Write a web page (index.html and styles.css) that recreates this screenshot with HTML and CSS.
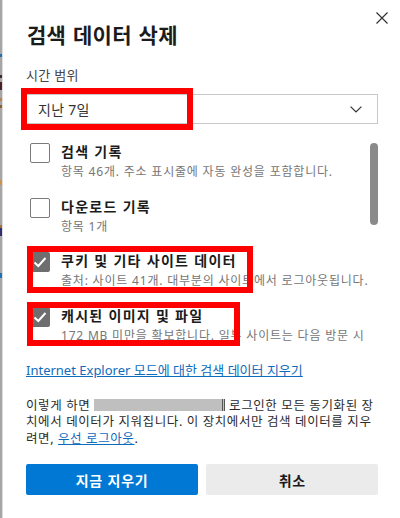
FILE: index.html
```html
<!DOCTYPE html>
<html lang="ko">
<head>
    <meta charset="UTF-8">
    <meta name="viewport" content="width=device-width, initial-scale=1.0">
    <title>검색 데이터 삭제</title>
    <link rel="stylesheet" href="styles.css">
</head>
<body>
    <div class="page">
        <div class="backdrop"></div>
        <div class="dialog">
            <div class="dialog-header">
                <h1>검색 데이터 삭제</h1>
                <button class="close" aria-label="닫기">
                    <svg width="12" height="12" viewBox="0 0 12 12"><path d="M0.5 0.5 L11.5 11.5 M11.5 0.5 L0.5 11.5" stroke="#333" stroke-width="1.2" fill="none"/></svg>
                </button>
            </div>

            <label class="field-label">시간 범위</label>
            <div class="select">
                <span>지난 7일</span>
                <svg width="12" height="7" viewBox="0 0 12 7"><path d="M0.6 0.6 L6 6 L11.4 0.6" stroke="#333" stroke-width="1.2" fill="none"/></svg>
            </div>

            <div class="options">
                <div class="option-list">
                    <div class="option">
                        <span class="checkbox"></span>
                        <div class="option-text">
                            <div class="option-title">검색 기록</div>
                            <div class="option-desc">항목 46개. 주소 표시줄에 자동 완성을 포함합니다.</div>
                        </div>
                    </div>
                    <div class="option">
                        <span class="checkbox"></span>
                        <div class="option-text">
                            <div class="option-title">다운로드 기록</div>
                            <div class="option-desc">항목 1개</div>
                        </div>
                    </div>
                    <div class="option">
                        <span class="checkbox checked">
                            <svg width="20" height="20" viewBox="0 0 20 20"><path d="M4.5 10.5 L8.3 14 L15.5 6" stroke="#fff" stroke-width="2" fill="none"/></svg>
                        </span>
                        <div class="option-text">
                            <div class="option-title">쿠키 및 기타 사이트 데이터</div>
                            <div class="option-desc nowrap">출처: 사이트 41개. 대부분의 사이트에서 로그아웃됩니다.</div>
                        </div>
                    </div>
                    <div class="option">
                        <span class="checkbox checked">
                            <svg width="20" height="20" viewBox="0 0 20 20"><path d="M4.5 10.5 L8.3 14 L15.5 6" stroke="#fff" stroke-width="2" fill="none"/></svg>
                        </span>
                        <div class="option-text">
                            <div class="option-title">캐시된 이미지 및 파일</div>
                            <div class="option-desc">172 MB 미만을 확보합니다. 일부 사이트는 다음 방문 시 로드 속도가 느려질 수 있습니다.</div>
                        </div>
                    </div>
                </div>
                <div class="scrollbar"><div class="thumb"></div></div>
            </div>

            <a class="ie-link" href="#">Internet Explorer 모드에 대한 검색 데이터 지우기</a>

            <p class="note">이렇게 하면 <span class="redacted"></span> 로그인한 모든 동기화된 장치에서 데이터가 지워집니다. 이 장치에서만 검색 데이터를 지우려면, <a href="#">우선 로그아웃</a>.</p>

            <div class="actions">
                <button class="btn btn-primary">지금 지우기</button>
                <button class="btn btn-secondary">취소</button>
            </div>
        </div>

        <!-- red annotation boxes drawn over the dialog -->
        <div class="mark mark-range"></div>
        <div class="mark mark-cookies"></div>
        <div class="mark mark-cache"></div>
    </div>
</body>
</html>
```

FILE: styles.css
```css
* {
    box-sizing: border-box;
}
body {
    margin: 0;
    font-family: "Noto Sans", "Noto Sans CJK KR", sans-serif;
    color: #1b1b1b;
    background-color: white;
}
.page {
    position: relative;
    display: flex;
    height: 518px;
    overflow: hidden;
}
.backdrop {
    flex: none;
    width: 2px;
    background: linear-gradient(to bottom,
        #a6a6a6 0 54px, #1e6fb8 54px 57px, #a6a6a6 57px 75px,
        #3a2a2a 75px 78px, #a6a6a6 78px 82px, #4a2020 82px 90px,
        #a6a6a6 90px 98px, #b98048 98px 101px, #a6a6a6 101px 105px,
        #8a6030 105px 108px, #a6a6a6 108px 180px, #d09050 180px 185px,
        #a6a6a6 185px 225px, #a07040 225px 228px, #303070 228px 236px,
        #a6a6a6 236px 273px, #1e6fb8 273px 278px, #a6a6a6 278px);
}
.dialog {
    flex: 1;
    padding: 12px 22px 0 23px;
    border-left: 1px solid #dcdcdc;
    background-color: white;
}
.dialog-header {
    display: flex;
    justify-content: space-between;
    align-items: flex-start;
}
h1 {
    margin: 9px 0 0 1px;
    font-size: 21px;
    font-weight: 600;
    line-height: 28px;
    letter-spacing: 0.3px;
    word-spacing: 1px;
    color: #1b1b1b;
}
.close {
    width: 12px;
    height: 12px;
    margin-right: -10px;
    padding: 0;
    border: none;
    background: none;
    display: flex;
}
.field-label {
    display: block;
    margin-top: 17px;
    font-size: 13px;
    line-height: 18px;
    letter-spacing: 0.3px;
    color: #444;
}
.select {
    display: flex;
    align-items: center;
    justify-content: space-between;
    height: 30px;
    margin-top: 10px;
    padding: 0 15px 0 11px;
    border: 1px solid #c8c8c8;
    font-size: 14px;
    letter-spacing: 0.3px;
    color: #333;
}
.options {
    display: flex;
    height: 202px;
    margin-top: 19px;
    overflow: hidden;
}
.option-list {
    flex: 1;
    display: flex;
    flex-direction: column;
    gap: 17.5px;
    margin-right: 2px;
    padding-left: 4px;
    overflow: hidden;
}
.option {
    display: flex;
    gap: 11px;
}
.checkbox {
    flex: none;
    width: 20px;
    height: 20px;
    border: 1px solid #7a7a7a;
    border-radius: 2px;
    background-color: white;
}
.checkbox.checked {
    border: none;
    background-color: #6e6e6e;
}
.checkbox svg {
    display: block;
}
.option-title {
    font-size: 14px;
    font-weight: 700;
    line-height: 18px;
    letter-spacing: 1.3px;
    color: #1b1b1b;
}
.option-desc {
    margin-top: 3px;
    font-size: 12px;
    line-height: 16px;
    letter-spacing: 0.8px;
    color: #767676;
}
.nowrap {
    white-space: nowrap;
}
.scrollbar {
    flex: none;
    width: 8px;
}
.thumb {
    height: 82px;
    border-radius: 4px;
    background-color: #8a8a8a;
}
.ie-link {
    display: inline-block;
    margin-top: 16px;
    font-size: 13px;
    line-height: 18px;
    color: #0f6cbd;
    text-decoration: underline;
}
.note {
    margin: 17.5px 0 0;
    font-size: 12.5px;
    line-height: 16.5px;
    letter-spacing: 0.6px;
    color: #2b2b2b;
}
.note a {
    color: #0f6cbd;
}
.redacted {
    display: inline-block;
    width: 131px;
    height: 12px;
    vertical-align: -1px;
    background-color: #bfbfbf;
    border-right: 3px double #555;
}
.actions {
    display: grid;
    grid-template-columns: 1fr 1fr;
    gap: 8px;
    margin-top: 17px;
}
.btn {
    height: 31px;
    border: none;
    border-radius: 2px;
    font-family: inherit;
    font-size: 14px;
    font-weight: 700;
    letter-spacing: 0.8px;
    cursor: pointer;
}
.btn-primary {
    background-color: #0078d4;
    color: white;
}
.btn-secondary {
    background-color: #ebebeb;
    color: #1b1b1b;
}
.mark {
    position: absolute;
    border: 6px solid #ff0000;
}
.mark-range {
    left: 21px;
    top: 88px;
    width: 172px;
    height: 42px;
}
.mark-cookies {
    left: 27px;
    top: 246px;
    width: 226px;
    height: 47px;
}
.mark-cache {
    left: 27px;
    top: 302px;
    width: 213px;
    height: 44px;
}
```
